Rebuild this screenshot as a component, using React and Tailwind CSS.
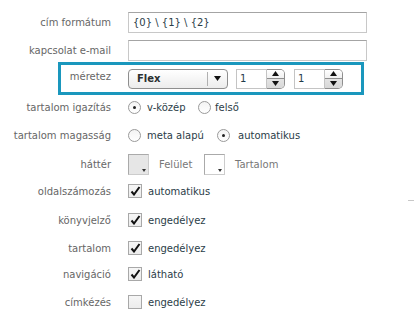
import React from "react";

const F = { fontFamily: '"DejaVu Sans", Verdana, sans-serif' };

function Label({ children, w = "w-[111px]" }) {
  return (
    <div className={`${w} shrink-0 text-right text-[10px] text-[#666]`}>{children}</div>
  );
}

function Radio({ checked }) {
  return (
    <span className="inline-flex h-[13px] w-[13px] shrink-0 items-center justify-center rounded-full border border-[#9a9a9a] bg-gradient-to-b from-[#f4f4f4] to-[#ffffff]">
      {checked && <span className="h-[3px] w-[3px] rounded-full bg-[#222]" />}
    </span>
  );
}

function Check({ checked }) {
  return (
    <span className="inline-flex h-[14px] w-[14px] shrink-0 items-center justify-center border border-[#a8a8a8] bg-gradient-to-b from-[#f6f6f6] to-[#ececec]">
      {checked && (
        <svg width="11" height="10" viewBox="0 0 11 10">
          <path d="M1.5 5.5 L4 8.5 L9.5 1" fill="none" stroke="#111" strokeWidth="2" />
        </svg>
      )}
    </span>
  );
}

function Swatch({ bg }) {
  return (
    <span className={`relative inline-block h-[21px] w-[21px] shrink-0 border border-[#aaa] border-r-[#ccc] border-b-[#ccc] ${bg}`}>
      <svg className="absolute right-[2px] bottom-[2px]" width="4" height="3" viewBox="0 0 4 3">
        <path d="M0 0 L4 0 L2 3 Z" fill="#333" />
      </svg>
    </span>
  );
}

function Spinner() {
  return (
    <div className="flex h-[20px]">
      <div className="flex w-[31px] items-center border border-[#c4c4c4] bg-white pl-[3px] text-[10px] text-[#1f3a4a]">1</div>
      <div className="flex w-[18px] flex-col overflow-hidden rounded-r-[5px] border border-l-0 border-[#8e8e8e]">
        <div className="flex flex-1 items-center justify-center border-b border-[#8e8e8e] bg-gradient-to-b from-white to-[#f0f0f0]">
          <svg width="7" height="5" viewBox="0 0 7 5"><path d="M0 5 L7 5 L3.5 0 Z" fill="#111" /></svg>
        </div>
        <div className="flex flex-1 items-center justify-center bg-gradient-to-b from-[#e4e4e4] to-[#d8d8d8]">
          <svg width="7" height="5" viewBox="0 0 7 5"><path d="M0 0 L7 0 L3.5 5 Z" fill="#111" /></svg>
        </div>
      </div>
    </div>
  );
}

function CheckRow({ label, text, checked, className = "" }) {
  return (
    <div className={`flex items-center ${className}`}>
      <Label>{label}</Label>
      <div className="ml-[17px] flex items-center gap-[6px]">
        <Check checked={checked} />
        <span className="text-[10px] text-[#2b3d48]">{text}</span>
      </div>
    </div>
  );
}

export default function App() {
  return (
    <div className="relative h-[319px] w-[414px] overflow-hidden bg-white" style={F}>
      <div className="flex flex-col pt-[12px]">
        <div className="flex items-center">
          <Label>cím formátum</Label>
          <div className="ml-[17px] flex h-[21px] w-[239px] items-center border border-[#c8c8c8] border-t-[#a4a4a4] pl-[4px] text-[10px] text-[#2b3d48]">
            {"{0} \\ {1} \\ {2}"}
          </div>
        </div>
        <div className="mt-[7px] flex items-center">
          <Label>kapcsolat e-mail</Label>
          <div className="ml-[17px] h-[21px] w-[239px] border border-[#c8c8c8] border-t-[#a4a4a4]" />
        </div>
        <div className="ml-[58px] mt-[1px] flex h-[33px] w-[306px] items-center border-[3px] border-[#1a97bd]">
          <Label w="w-[50px]">
            <span className="relative top-[-2px]">méretez</span>
          </Label>
          <div className="ml-[17px] flex h-[20px] w-[100px] items-center rounded-[4px] border border-[#8e8e8e] bg-gradient-to-b from-white to-[#ececec]">
            <span className="flex-1 pl-[8px] text-[10px] font-bold text-[#2b3030]">Flex</span>
            <span className="h-[14px] w-px bg-[#b0b0b0]" />
            <span className="flex w-[19px] justify-center">
              <svg width="7" height="5" viewBox="0 0 7 5"><path d="M0 0 L7 0 L3.5 5 Z" fill="#111" /></svg>
            </span>
          </div>
          <div className="ml-[8px]"><Spinner /></div>
          <div className="ml-[9px]"><Spinner /></div>
        </div>
        <div className="mt-[1px] flex h-[22px] items-center">
          <Label>tartalom igazítás</Label>
          <div className="ml-[17px] flex items-center">
            <Radio checked />
            <span className="ml-[6px] w-[51px] text-[10px] text-[#2b3d48]">v-közép</span>
            <Radio />
            <span className="ml-[4px] text-[10px] text-[#2b3d48]">felső</span>
          </div>
        </div>
        <div className="mt-[6px] flex h-[22px] items-center">
          <Label>tartalom magasság</Label>
          <div className="ml-[17px] flex items-center">
            <Radio />
            <span className="ml-[6px] w-[70px] text-[10px] text-[#2b3d48]">meta alapú</span>
            <Radio checked />
            <span className="ml-[8px] text-[10px] text-[#2b3d48]">automatikus</span>
          </div>
        </div>
        <div className="mt-[7px] flex h-[22px] items-center">
          <Label>háttér</Label>
          <div className="ml-[17px] flex items-center">
            <Swatch bg="bg-[#e6e6e6]" />
            <span className="ml-[10px] w-[45px] text-[10px] text-[#777]">Felület</span>
            <Swatch bg="bg-white" />
            <span className="ml-[10px] text-[10px] text-[#777]">Tartalom</span>
          </div>
        </div>
        <CheckRow className="mt-[5px] h-[22px]" label="oldalszámozás" text="automatikus" checked />
        <CheckRow className="mt-[7px] h-[22px]" label="könyvjelző" text="engedélyez" checked />
        <CheckRow className="mt-[6px] h-[22px]" label="tartalom" text="engedélyez" checked />
        <CheckRow className="mt-[4px] h-[22px]" label="navigáció" text="látható" checked />
        <CheckRow className="mt-[6px] h-[22px]" label="címkézés" text="engedélyez" checked={false} />
      </div>
      <div className="absolute left-[408px] top-[200px] h-px w-[6px] bg-[#c8c8c8]" />
    </div>
  );
}
